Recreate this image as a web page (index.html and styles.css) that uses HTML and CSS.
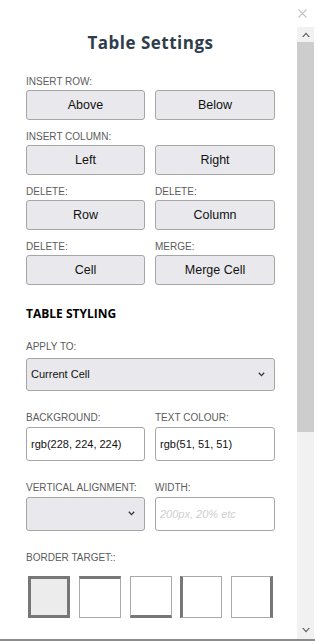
FILE: index.html
```html
<!DOCTYPE html>
<html lang="en">
<head>
<meta charset="utf-8">
<title>Table Settings</title>
<link rel="stylesheet" href="styles.css">
</head>
<body>
<div class="dialog">
  <div class="topbar">
    <svg class="close" width="9" height="9" viewBox="0 0 9 9"><path d="M0.5 0.5 L8.5 8.5 M8.5 0.5 L0.5 8.5" stroke="#c4c4c4" stroke-width="1.1" fill="none"/></svg>
  </div>
  <div class="frame">
    <div class="content">
      <h1 class="title">Table Settings</h1>

      <div class="group">
        <div class="label">INSERT ROW:</div>
        <div class="pair">
          <button class="btn">Above</button>
          <button class="btn">Below</button>
        </div>
      </div>

      <div class="group">
        <div class="label">INSERT COLUMN:</div>
        <div class="pair">
          <button class="btn">Left</button>
          <button class="btn">Right</button>
        </div>
      </div>

      <div class="group">
        <div class="pair">
          <div class="label">DELETE:</div>
          <div class="label">DELETE:</div>
          <button class="btn">Row</button>
          <button class="btn">Column</button>
        </div>
      </div>

      <div class="group">
        <div class="pair">
          <div class="label">DELETE:</div>
          <div class="label">MERGE:</div>
          <button class="btn">Cell</button>
          <button class="btn">Merge Cell</button>
        </div>
      </div>

      <h2 class="section">TABLE STYLING</h2>

      <div class="field">
        <div class="label label-select">APPLY TO:</div>
        <div class="select select-wide">
          <span>Current Cell</span>
          <svg class="chev" width="7" height="5" viewBox="0 0 7 5"><path d="M0.8 0.8 L3.5 3.6 L6.2 0.8" stroke="#333" stroke-width="1.3" fill="none"/></svg>
        </div>
      </div>

      <div class="field">
        <div class="pair">
          <div class="label">BACKGROUND:</div>
          <div class="label">TEXT COLOUR:</div>
          <input class="input" type="text" value="rgb(228, 224, 224)">
          <input class="input" type="text" value="rgb(51, 51, 51)">
        </div>
      </div>

      <div class="field">
        <div class="pair">
          <div class="label">VERTICAL ALIGNMENT:</div>
          <div class="label">WIDTH:</div>
          <div class="select select-tall">
            <span></span>
            <svg class="chev" width="7" height="5" viewBox="0 0 7 5"><path d="M0.8 0.8 L3.5 3.6 L6.2 0.8" stroke="#333" stroke-width="1.3" fill="none"/></svg>
          </div>
          <input class="input" type="text" placeholder="200px, 20% etc">
        </div>
      </div>

      <div class="field">
        <div class="label">BORDER TARGET::</div>
        <div class="targets">
          <div class="target t-all"></div>
          <div class="target t-top"></div>
          <div class="target t-bottom"></div>
          <div class="target t-left"></div>
          <div class="target t-right"></div>
        </div>
      </div>
    </div>
    <div class="scrollbar">
      <div class="sb-btn sb-up">
        <svg width="8" height="5" viewBox="0 0 8 5"><path d="M0 5 L4 0.5 L8 5 L6.5 5 L4 2.3 L1.5 5 Z" fill="#606060"/></svg>
      </div>
      <div class="sb-thumb"></div>
      <div class="sb-track"></div>
      <div class="sb-btn sb-down">
        <svg width="8" height="5" viewBox="0 0 8 5"><path d="M0 0 L4 4.5 L8 0 L6.5 0 L4 2.7 L1.5 0 Z" fill="#606060"/></svg>
      </div>
    </div>
  </div>
  <div class="bottom-line"></div>
</div>
</body>
</html>
```
FILE: styles.css
```css
* { box-sizing: border-box; }

html, body {
  margin: 0;
  padding: 0;
  background: #ffffff;
}

body {
  width: 317px;
  height: 641px;
  overflow: hidden;
  font-family: "Liberation Sans", Arial, sans-serif;
}

.dialog {
  width: 317px;
  height: 641px;
  display: flex;
  flex-direction: column;
}

.topbar {
  height: 27px;
  display: flex;
  justify-content: flex-end;
  align-items: flex-start;
  padding: 9px 10px 0 0;
}

.close { display: block; }

.frame {
  height: 612px;
  display: flex;
  flex-direction: row;
}

.content {
  width: 297px;
  overflow: hidden;
  padding: 4px 22px 0 26px;
}

.title {
  margin: 0 0 20.5px 0;
  font-family: "Open Sans", "Noto Sans", sans-serif;
  font-weight: 700;
  font-size: 17px;
  line-height: 24px;
  letter-spacing: 0.5px;
  color: #2e3d4c;
  text-align: center;
}

.label {
  font-size: 10px;
  line-height: 12px;
  color: #5c5c5c;
  margin-bottom: 2.6px;
  white-space: nowrap;
}

.group { margin-bottom: 10.5px; }

.pair {
  display: grid;
  grid-template-columns: 119px 120px;
  column-gap: 10px;
}

.btn {
  height: 30px;
  margin: 0;
  padding: 0;
  border: 1px solid #a6a6a6;
  border-radius: 3px;
  background: #e9e9ed;
  color: #111;
  font-family: "Liberation Sans", Arial, sans-serif;
  font-size: 12.5px;
}

.section {
  margin: 21px 0 19px 0;
  font-family: "Open Sans", "Noto Sans", sans-serif;
  font-weight: 700;
  font-size: 12px;
  line-height: 16px;
  color: #000;
}

.field { margin-bottom: 21.5px; }

.label-select { margin-bottom: 4.3px; }

.select {
  display: flex;
  align-items: center;
  justify-content: space-between;
  border: 1px solid #a6a6a6;
  border-radius: 3px;
  background: #e9e9ed;
  color: #111;
  font-size: 11px;
  padding: 0 9px 0 4px;
}

.select-wide { height: 33px; width: 249px; }
.select-tall { height: 34px; }

.chev { display: block; }

.input {
  height: 34px;
  width: 100%;
  margin: 0;
  border: 1px solid #a6a6a6;
  border-radius: 3px;
  background: #fff;
  color: #111;
  font-family: "Liberation Sans", Arial, sans-serif;
  font-size: 11px;
  padding: 0 4px;
  outline: none;
}

.input::placeholder {
  color: #cfcfcf;
  font-style: italic;
}

.targets {
  display: flex;
  gap: 8.75px;
  padding: 9.5px 0 0 2px;
}

.target {
  width: 42px;
  height: 42px;
  border: 1px solid #a9a9a9;
  background: #fff;
}

.t-all { border: 3px solid #777; background: #ececec; }
.t-top { border-top: 3px solid #777; }
.t-bottom { border-bottom: 3px solid #777; }
.t-left { border-left: 3px solid #777; }
.t-right { border-right: 3px solid #777; }

.scrollbar {
  width: 17px;
  display: flex;
  flex-direction: column;
  background: #f1f1f1;
}

.sb-btn {
  display: flex;
  align-items: center;
  justify-content: center;
  background: #f1f1f1;
}

.sb-up { height: 15px; }
.sb-down { height: 17px; }

.sb-thumb {
  height: 390px;
  background: #cdcdcd;
}

.sb-track { flex: 1; }

.bottom-line {
  height: 2px;
  width: 315px;
  background: #8c8c8c;
}
```
